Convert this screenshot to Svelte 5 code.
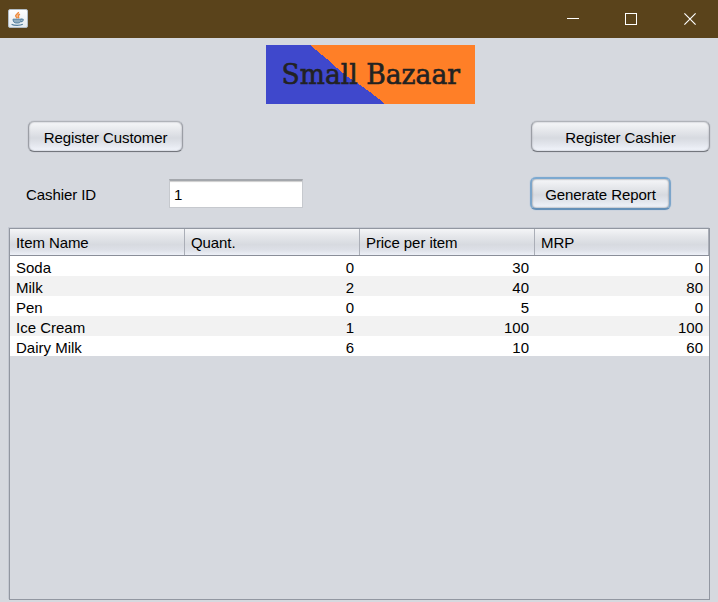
<script>
  const columns = ['Item Name', 'Quant.', 'Price per item', 'MRP'];
  const rows = [
    ['Soda', 0, 30, 0],
    ['Milk', 2, 40, 80],
    ['Pen', 0, 5, 0],
    ['Ice Cream', 1, 100, 100],
    ['Dairy Milk', 6, 10, 60]
  ];
  let cashierId = $state('1');
</script>

<div class="window">
  <header class="titlebar">
    <svg class="java" width="20" height="19" viewBox="0 0 20 19" aria-hidden="true">
      <defs>
        <linearGradient id="tile" x1="0" y1="0" x2="0" y2="1">
          <stop offset="0" stop-color="#ffffff" />
          <stop offset="1" stop-color="#e4eaef" />
        </linearGradient>
      </defs>
      <rect x="0.5" y="0.5" width="19" height="18" rx="1.5" fill="url(#tile)" stroke="#b3bdc5" />
      <path d="M10.4 3c.5 2-3.7 2.4-2.5 4.4l1.5 1.9M12 5.2c-2.1.8-2.2 1.8-1.5 2.6.4.5.1 1-.3 1.4" fill="none" stroke="#ee8a3c" stroke-width="1.6" />
      <path d="M5 10.2h8.2c-.2 3.3-1.4 3.8-4.1 3.8S5.2 13.4 5 10.2Z" fill="#91adbf" stroke="#55809f" />
      <path d="M3.6 15.2c2.5 1.5 8.7 1.4 11.2 0M13 10.2c3.2-.7 2.8 2-.2 2.7" fill="none" stroke="#55809f" stroke-width="1.2" />
    </svg>
    <div class="controls">
      <svg width="12" height="12" viewBox="0 0 12 12" aria-label="Minimize"><path d="M0 5.5h12" stroke="#fff" /></svg>
      <svg width="12" height="12" viewBox="0 0 12 12" aria-label="Maximize"><rect x=".5" y=".5" width="11" height="11" fill="none" stroke="#fff" /></svg>
      <svg class="close" width="12" height="12" viewBox="0 0 12 12" aria-label="Close"><path d="M.4.4l11.2 11.2M11.6.4L.4 11.6" stroke="#fff" stroke-width="1.15" /></svg>
    </div>
  </header>

  <svg class="logo" width="209" height="59" viewBox="0 0 209 59">
    <rect width="209" height="59" fill="#ff7f27" />
    <path d="M0 0H44L50 5L56 10L61 14L71 23L82 32L94 40L104 47L113 54L118 59H0Z" fill="#3f48cc" shape-rendering="crispEdges" />
    <text x="15.5" y="38.8" textLength="178.5" lengthAdjust="spacingAndGlyphs">Small Bazaar</text>
  </svg>

  <div class="line first">
    <button class="customer">Register Customer</button>
    <button class="cashier">Register Cashier</button>
  </div>
  <div class="line second">
    <label for="cashier-id">Cashier ID</label>
    <input id="cashier-id" bind:value={cashierId} />
    <button class="report">Generate Report</button>
  </div>

  <div class="pane">
    <div class="grid head">
      {#each columns as column}<span>{column}</span>{/each}
    </div>
    {#each rows as row}
      <div class="grid row">
        {#each row as cell}<span>{cell}</span>{/each}
      </div>
    {/each}
  </div>
</div>

<style>
  :global(body) { background: #d6d9df; }
  .window {
    box-sizing: border-box;
    width: 718px;
    height: 602px;
    overflow: hidden;
    display: flex;
    flex-direction: column;
    background: #d6d9df;
    color: #000;
    font: 15px/20px "Liberation Sans", Arial, sans-serif;
  }
  .titlebar {
    box-sizing: border-box;
    height: 38px;
    flex: none;
    display: flex;
    justify-content: space-between;
    align-items: center;
    padding: 0 22px 0 8px;
    background: #5a431b;
  }
  .java { margin-top: -1px; }
  .controls { display: flex; gap: 46px; }
  .controls svg { display: block; }
  .close { margin-left: 1px; }
  .logo { display: block; flex: none; margin: 7px 0 0 266px; }
  .logo text { font: 27px "DejaVu Serif", serif; fill: #222; stroke: #222; stroke-width: .6; }
  .line { display: flex; flex: none; box-sizing: border-box; }
  .first { height: 31px; margin-top: 17px; padding: 0 8px 0 28px; justify-content: space-between; }
  .second { height: 33px; margin-top: 25px; padding-left: 26px; align-items: center; }
  button {
    box-sizing: border-box;
    margin: 0;
    padding: 2px 0 0;
    border: 1px solid;
    border-color: #b0b3b9 #9b9ea5 #73767d;
    border-radius: 6px;
    background: linear-gradient(#f6f7f9 0%, #e5e7eb 30%, #d7dae0 55%, #e2e5ec 76%, #f2f5fc 100%);
    box-shadow: 0 0 1px #85888f, inset 0 0 1.5px #85888f;
    font: inherit;
    letter-spacing: -.08px;
    color: inherit;
    white-space: nowrap;
  }
  .customer { width: 155px; height: 31px; }
  .cashier { width: 179px; height: 31px; }
  .report {
    width: 141px;
    height: 33px;
    margin-left: 227px;
    border: 2px solid;
    border-color: #7ca9d0 #7ca5ca #6590b8;
    box-shadow: 0 0 1px #73a4d1, inset 0 0 2px #63676f;
  }
  label { width: 143px; padding-top: 2px; letter-spacing: -.08px; }
  input {
    box-sizing: border-box;
    width: 134px;
    height: 29px;
    margin: 0;
    padding: 0 4px;
    border: 1px solid #c6c9ce;
    border-top: 2px solid #a4a7ac;
    border-radius: 0;
    outline: none;
    background: #fff;
    box-shadow: inset 0 2px 1px -1px #ccc;
    font: inherit;
    color: inherit;
  }
  .pane {
    box-sizing: border-box;
    width: 701px;
    height: 372px;
    flex: none;
    margin: 18px 0 0 9px;
    border: 1px solid #9297a1;
    box-shadow: -1px -1px #c5c9d2;
  }
  .grid { display: grid; grid-template-columns: 175px 175px 175px 174px; box-sizing: border-box; }
  .head {
    height: 27px;
    border-bottom: 1px solid #8a8e99;
    background: linear-gradient(#f4f5f7 0%, #e4e6ea 30%, #d7dae0 60%, #dde0e7 80%, #edf0f7 100%);
  }
  .head span { box-sizing: border-box; padding: 4px 0 0 6px; border-right: 1px solid #aaaeb7; line-height: 20px; letter-spacing: -.08px; }
  .row { height: 20px; background: #fff; }
  .row:nth-child(odd) { background: #f2f2f2; }
  .row span { padding: 2px 6px 0; text-align: right; line-height: 20px; }
  .row span:first-child { text-align: left; }
</style>
